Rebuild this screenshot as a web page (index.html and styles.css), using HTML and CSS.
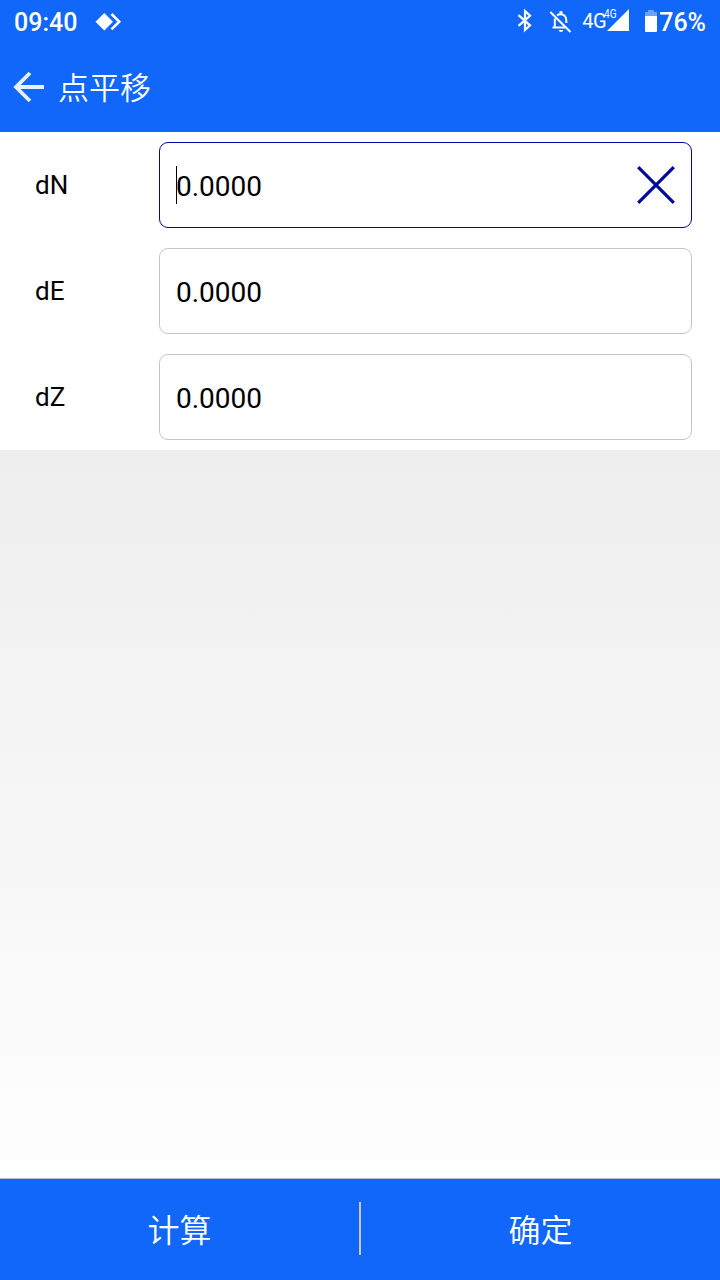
FILE: index.html
```html
<!DOCTYPE html>
<html lang="zh-CN">
<head>
    <meta charset="UTF-8">
    <meta name="viewport" content="width=device-width, initial-scale=1.0">
    <title>点平移</title>
    <link rel="stylesheet" href="styles.css">
</head>
<body>

<div class="status-bar">
    <span class="clock">09:40</span>
    <svg class="icon-app" width="28" height="20" viewBox="0 0 28 20">
        <path d="M9.3 1L18 9.7L9.3 18.4L0.5 9.7Z" fill="#fff"/>
        <path d="M16.5 2L24.2 9.7L16.5 17.4" fill="none" stroke="#fff" stroke-width="2.6"/>
    </svg>
    <div class="status-right">
        <svg class="icon-bluetooth" width="16" height="24" viewBox="0 0 16 24">
            <path d="M1.5 6.2L13 16.3L8 21V2L13 6.8L1.5 16.8" fill="none" stroke="#fff" stroke-width="2.2"/>
        </svg>
        <svg class="icon-bell" width="24" height="24" viewBox="0 0 24 24">
            <path d="M5.8 8.5V17M3.5 17.5H16M8 5.5C10 3.8 14 3.8 16 6.2C17.6 8 17.4 10 17.4 13" fill="none" stroke="#fff" stroke-width="2"/>
            <path d="M12 1.2V4" stroke="#fff" stroke-width="3"/>
            <path d="M9.8 20H14.2A2.2 2 0 0 1 9.8 20Z" fill="#fff"/>
            <path d="M1.3 2L21.5 22" stroke="#fff" stroke-width="2"/>
        </svg>
        <span class="network">4G</span>
        <span class="signal">
            <svg width="22" height="22" viewBox="0 0 22 22"><path d="M22 0V22H0Z" fill="#fff"/></svg>
            <span class="signal-label">4G</span>
        </span>
        <svg class="icon-battery" width="12" height="22" viewBox="0 0 12 22">
            <path d="M3 0H9V2H12V6H0V2H3Z" fill="#6ca1fb"/>
            <path d="M0 6H12V21A1 1 0 0 1 11 22H1A1 1 0 0 1 0 21Z" fill="#fff"/>
        </svg>
        <span class="battery-text">76%</span>
    </div>
</div>

<header>
    <svg class="back" width="32" height="32" viewBox="0 0 32 32">
        <path d="M31 16H3M17 2L3 16L17 30" fill="none" stroke="#fff" stroke-opacity="0.9" stroke-width="3.8"/>
    </svg>
    <h1>点平移</h1>
</header>

<form class="offset-form">
    <div class="row">
        <span class="label">dN</span>
        <div class="field active">
            <span class="caret"></span>
            <span class="value">0.0000</span>
            <svg class="clear" width="38" height="38" viewBox="0 0 38 38">
                <path d="M1.2 1.2L36.8 36.8M36.8 1.2L1.2 36.8" stroke="#000a9a" stroke-width="3.2"/>
            </svg>
        </div>
    </div>
    <div class="row">
        <span class="label">dE</span>
        <div class="field"><span class="value">0.0000</span></div>
    </div>
    <div class="row">
        <span class="label">dZ</span>
        <div class="field"><span class="value">0.0000</span></div>
    </div>
</form>

<main></main>

<footer>
    <button type="button">计算</button>
    <span class="divider"></span>
    <button type="button">确定</button>
</footer>

</body>
</html>
```
FILE: styles.css
```css
* {
    box-sizing: border-box;
}

body {
    font-family: Roboto, "Noto Sans CJK SC", sans-serif;
    margin: 0;
    height: 1280px;
    display: flex;
    flex-direction: column;
    color: #000;
    background: white;
    overflow: hidden;
}

svg {
    display: block;
    flex: none;
}

.status-bar {
    height: 44px;
    padding: 0 14px;
    display: flex;
    align-items: center;
    background: #1167f9;
    color: white;
}

.clock {
    font-size: 25px;
    font-weight: 500;
}

.icon-app {
    margin: 0 0 1px 18px;
}

.status-right {
    margin-left: auto;
    display: flex;
    align-items: center;
}

.icon-bluetooth {
    margin: 0 16px 2px 0;
}

.icon-bell {
    margin: 0 9px 1px 0;
}

.network {
    font-size: 20px;
    letter-spacing: -0.5px;
    margin-bottom: 3px;
}

.signal {
    position: relative;
    margin: 0 16px 4px 1px;
}

.signal-label {
    position: absolute;
    top: -1px;
    left: -3px;
    font-size: 12px;
    line-height: 13px;
    transform: scaleX(0.84);
    transform-origin: left;
}

.icon-battery {
    margin: 0 2px 3px 0;
}

.battery-text {
    font-size: 25px;
    font-weight: 500;
    margin-top: 1px;
}

header {
    height: 88px;
    padding: 0 13px 3px;
    display: flex;
    align-items: center;
    background: #1167f9;
    color: white;
}

header h1 {
    margin: 4px 0 0 13px;
    font-size: 31px;
    font-weight: 350;
    line-height: 40px;
}

.offset-form {
    height: 318px;
    padding: 10px 28px 10px 35px;
    display: flex;
    flex-direction: column;
    gap: 20px;
}

.row {
    display: flex;
    align-items: center;
}

.label {
    width: 124px;
    font-size: 26px;
}

.field {
    position: relative;
    flex: 1;
    height: 86px;
    padding: 2px 16px 0 16px;
    display: flex;
    align-items: center;
    justify-content: space-between;
    border: 1px solid #c4c4c4;
    border-radius: 9px;
}

.field.active {
    border-color: #000a9a;
}

.clear {
    margin-bottom: 2px;
}

.value {
    font-size: 28px;
}

.caret {
    position: absolute;
    left: 16px;
    top: 23px;
    width: 1px;
    height: 38px;
    background: black;
}

main {
    flex: 1;
    background: linear-gradient(to bottom, #eeeeee, #fefefe);
}

footer {
    height: 102px;
    padding-bottom: 2px;
    display: flex;
    align-items: center;
    background: #1167f9;
    border-top: 1px solid #b9bfcc;
}

footer button {
    flex: 1;
    height: 100%;
    padding: 0 0 2px;
    border: none;
    background: none;
    color: white;
    font-family: inherit;
    font-size: 32px;
    font-weight: 350;
}

.divider {
    width: 2px;
    height: 53px;
    background: #c8c8c8;
}
```
